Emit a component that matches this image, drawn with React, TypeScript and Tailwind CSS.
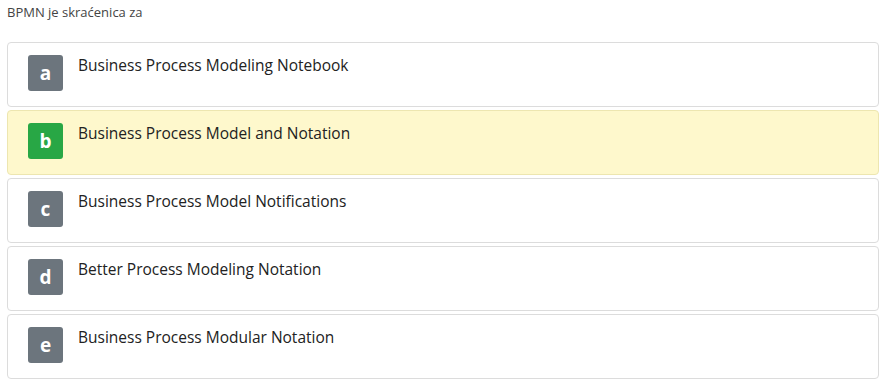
const options = [
  { letter: 'a', text: 'Business Process Modeling Notebook' },
  { letter: 'b', text: 'Business Process Model and Notation', correct: true },
  { letter: 'c', text: 'Business Process Model Notifications' },
  { letter: 'd', text: 'Better Process Modeling Notation' },
  { letter: 'e', text: 'Business Process Modular Notation' },
];

export default function App() {
  return (
    <div className="w-[886px] h-[382px] bg-white px-[7px] pt-[2px] text-[#333] font-['Open_Sans',sans-serif]">
      <p className="text-[13px] leading-[20px] text-[#444]">BPMN je skraćenica za</p>
      <div className="mt-[20px] flex flex-col gap-[3px]">
        {options.map((o) => (
          <div
            key={o.letter}
            className={
              o.correct
                ? 'h-[65px] flex items-start gap-[15px] rounded-[4px] border border-[#ede6b0] bg-[#fef8cc] pl-[20px] pt-[12px]'
                : 'h-[65px] flex items-start gap-[15px] rounded-[4px] border border-[#dcdcdc] bg-white pl-[20px] pt-[12px]'
            }
          >
            <div
              className={
                o.correct
                  ? 'w-[35px] h-[36px] rounded-[3px] bg-[#28a745] text-white flex items-center justify-center text-[19px] font-bold'
                  : 'w-[35px] h-[36px] rounded-[3px] bg-[#6c757d] text-white flex items-center justify-center text-[19px] font-bold'
              }
            >
              {o.letter}
            </div>
            <span className="text-[15.5px] leading-[22px] -mt-[1px] text-[#222]">{o.text}</span>
          </div>
        ))}
      </div>
    </div>
  );
}
